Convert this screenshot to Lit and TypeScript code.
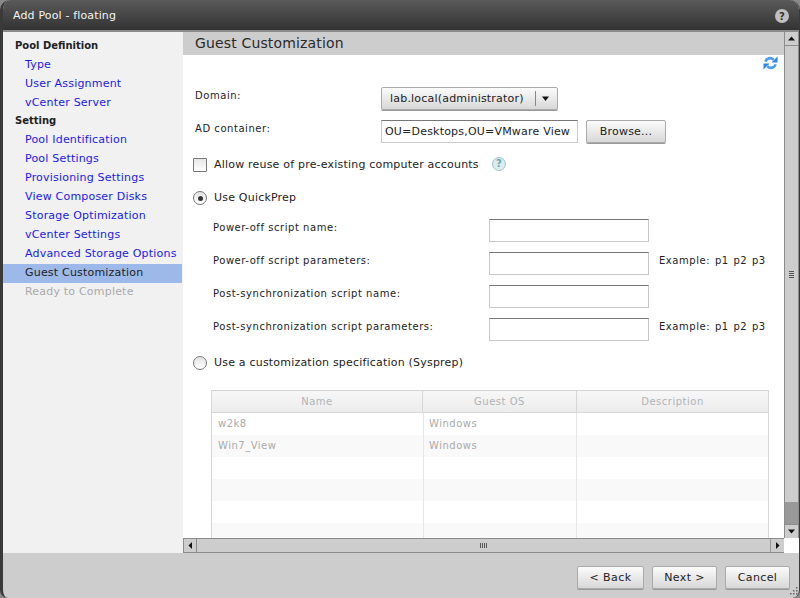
import { LitElement, html, css, svg } from "lit";
import { customElement } from "lit/decorators.js";

const tri = (d: string) => svg`<svg width="9" height="9" viewBox="0 0 9 9"><path d="${d}" fill="#111"/></svg>`;

@customElement("app-root")
export class AppRoot extends LitElement {
  static styles = css`
    :host { display: block; width: 800px; height: 598px; background: #8a8a8a; font-family: "DejaVu Sans", Verdana, sans-serif; font-size: 11px; letter-spacing: .2px; color: #222; overflow: hidden; }
    * { box-sizing: border-box; }
    .window { position: relative; height: 598px; display: flex; flex-direction: column; background: #cdcdcd; border-radius: 10px 10px 8px 8px; overflow: hidden; border-left: 3px solid #3a3a3a; border-right: 1px solid #3a3a3a; }
    .titlebar { height: 32px; flex: none; margin-left: -3px; margin-right: -1px; display: flex; align-items: flex-start; justify-content: space-between; padding: 9px 11px 0 13px; color: #f4f4f4; background: linear-gradient(#5a5a5a, #333 93%, #8a8a8a 93%, #8a8a8a); font-size: 11px; letter-spacing: .15px; }
    .help { width: 14px; height: 14px; border-radius: 50%; background: #c0c0c0; color: #333; font-size: 10px; font-weight: bold; display: flex; align-items: center; justify-content: center; letter-spacing: 0; }
    .body { flex: none; height: 521px; display: flex; }
    .side { width: 180px; flex: none; background: #f1f1f1; padding-top: 4px; }
    .side div { height: 19px; line-height: 18px; white-space: nowrap; }
    .side div.head1 { height: 20px; line-height: 20px; }
    .side div.head2 { height: 18px; line-height: 16px; }
    .head { padding-left: 12px; font-weight: bold; color: #222; font-size: 10px; letter-spacing: 0; }
    .link { padding-left: 22px; color: #1a1ae6; margin-right: 1px; }
    .cur { background: #9cb9e9; color: #222; }
    .off { color: #aaa; }
    .main { flex: 1; min-width: 0; display: flex; flex-direction: column; background: #fff; }
    .band { height: 23px; flex: none; background: #cdcdcd; padding-left: 12px; font-size: 14px; letter-spacing: .15px; line-height: 23px; color: #2a2a2a; }
    .content { flex: 1; min-height: 0; overflow: hidden; display: flex; flex-direction: column; }
    .content > * { flex: none; }
    .refresh { height: 32px; display: flex; justify-content: flex-end; padding-right: 6px; }
    .row { display: flex; align-items: center; height: 23px; }
    .row-ad { margin-top: 10px; }
    .lab { width: 198px; padding-left: 12px; font-size: 10px; letter-spacing: .55px; position: relative; top: -3px; }
    .sel { width: 177px; height: 23px; display: flex; align-items: center; border: 1px solid #aaa; border-radius: 2px; background: linear-gradient(#fbfbfb, #d8d8d8); padding-left: 8px; color: #222; box-shadow: 0 1px 0 #999; }
    .sel span { width: 145px; }
    .sep { width: 1px; height: 15px; background: #888; margin-right: 5px; }
    .input { height: 23px; background: #fff; border: 1px solid #c8c8c8; border-top-color: #777; padding-left: 3px; line-height: 21px; white-space: nowrap; overflow: hidden; }
    .ad { width: 197px; }
    .btn { height: 23px; border: 1px solid #aaa; border-radius: 2px; background: linear-gradient(#fbfbfb, #d8d8d8); display: flex; align-items: center; justify-content: center; color: #222; box-shadow: 0 1px 0 #999; }
    .browse { width: 80px; margin-left: 8px; }
    .opt { display: flex; align-items: center; padding-left: 10px; height: 16px; gap: 7px; }
    .opt .t { margin-top: -2px; }
    .opt-check { margin-top: 14px; }
    .opt-quick { margin-top: 17px; }
    .opt-spec { margin-top: 4px; }
    .box { width: 14px; height: 14px; border: 1px solid #777; background: linear-gradient(#e8e8e8, #fff); border-radius: 1px; }
    .radio { width: 14px; height: 14px; border: 1px solid #777; border-radius: 50%; background: linear-gradient(#e4e4e4, #fff); display: flex; align-items: center; justify-content: center; }
    .radio i { width: 5px; height: 5px; border-radius: 50%; background: #333; }
    .q { width: 14px; height: 14px; margin-left: 6px; border-radius: 50%; border: 1px solid #9cc4cc; background: #dcecef; color: #6ea3ad; font-size: 10px; font-weight: bold; display: flex; align-items: center; justify-content: center; margin-top: -3px; letter-spacing: 0; }
    .scripts { margin-top: 13px; }
    .sc { display: flex; align-items: center; height: 23px; margin-bottom: 10px; }
    .sc .l { width: 306px; padding-left: 30px; font-size: 10px; letter-spacing: .55px; white-space: nowrap; position: relative; top: -3px; }
    .sc .input { width: 160px; }
    .sc .e { margin-left: 10px; font-size: 10px; letter-spacing: .55px; word-spacing: 1px; white-space: nowrap; position: relative; top: -3px; }
    .table { margin-left: 28px; width: 558px; margin-top: 19px; border-left: 1px solid #d6d6d6; border-right: 1px solid #d6d6d6; border-top: 1px solid #d6d6d6; }
    .tr { display: grid; height: 22px; font-size: 10px; letter-spacing: .5px; color: #aaa; }
    .tr.h { grid-template-columns: 211px 154px 1fr; background: linear-gradient(#f7f7f7, #ececec); border-bottom: 1px solid #d6d6d6; color: #b0b4b8; }
    .tr.h div { display: flex; align-items: center; justify-content: center; border-right: 1px solid #d6d6d6; }
    .tr.h div:last-child { border-right: 0; }
    .tr.b { grid-template-columns: 212px 153px 1fr; }
    .tr.alt { background: #f9f9f9; }
    .tr.b div { display: flex; align-items: center; padding: 0 0 2px 6px; border-right: 1px solid #e6e6e6; }
    .tr.b div:nth-child(2) { padding-left: 5px; }
    .tr.b div:last-child { border-right: 0; }
    .hs { height: 15px; flex: none; display: flex; background: #cdcdcd; border-top: 1px solid #8c8c8c; border-bottom: 1px solid #8c8c8c; }
    .sb { flex: none; display: flex; align-items: center; justify-content: center; background: #cdcdcd; }
    .hs .sb { width: 14px; }
    .hs .sb.l { border-left: 1px solid #8c8c8c; border-right: 1px solid #8c8c8c; }
    .hs .sb.r { background: #cdcdcd; border-left: 1px solid #999; }
    .hs .thumb { flex: 1; display: flex; align-items: center; justify-content: center; gap: 1px; }
    .hs .thumb i { width: 1px; height: 5px; background: #555; }
    .vcol { width: 15px; flex: none; display: flex; flex-direction: column; background: #fff; }
    .vs { flex: 1; display: flex; flex-direction: column; background: #999; border-left: 1px solid #8c8c8c; border-right: 1px solid #8c8c8c; }
    .vs .sb { height: 14px; border-bottom: 1px solid #8c8c8c; }
    .vs .sb.down { border-bottom: 0; border-top: 1px solid #8c8c8c; }
    .vs .thumb { height: 456px; background: #cdcdcd; flex: none; display: flex; flex-direction: column; align-items: center; justify-content: center; gap: 1px; }
    .vs .thumb i { width: 5px; height: 1px; background: #555; }
    .vs .sp { flex: 1; }
    .corner { height: 15px; flex: none; }
    .foot { flex: 1; display: flex; justify-content: flex-end; align-items: flex-start; padding: 13px 9px 0 0; gap: 8px; font-size: 11px; letter-spacing: .4px; }
    .back { width: 67px; }
    .next, .cancel { width: 65px; }
    .grip { position: absolute; right: 0; bottom: 0; width: 12px; height: 12px; }
  `;

  render() {
    const lk = (t: string) => html`<div class="link">${t}</div>`;
    const sc = (l: string, e = "") => html`<div class="sc"><div class="l">${l}</div><div class="input"></div>${e ? html`<div class="e">${e}</div>` : ""}</div>`;
    const rows: [string, string][] = [["w2k8", "Windows"], ["Win7_View", "Windows"], ["", ""], ["", ""], ["", ""], ["", ""]];
    return html`<div class="window">
      <div class="titlebar"><span>Add Pool - floating</span><span class="help">?</span></div>
      <div class="body">
        <nav class="side">
          <div class="head head1">Pool Definition</div>
          ${lk("Type")}${lk("User Assignment")}${lk("vCenter Server")}
          <div class="head head2">Setting</div>
          ${lk("Pool Identification")}${lk("Pool Settings")}${lk("Provisioning Settings")}${lk("View Composer Disks")}${lk("Storage Optimization")}${lk("vCenter Settings")}${lk("Advanced Storage Options")}
          <div class="link cur">Guest Customization</div>
          <div class="link off">Ready to Complete</div>
        </nav>
        <div class="main">
          <div class="band">Guest Customization</div>
          <div class="content">
            <div class="refresh"><svg width="15" height="16" viewBox="0 0 16 16" fill="none" stroke="#4a9cf0" stroke-width="2.8"><path d="M2.5 6.5C3.5 3 8 1.5 11.5 4.5"/><path d="M13.5 9.5C12.5 13 8 14.5 4.5 11.5"/><path d="M9 7.5L15.5 7.5 15.5 1z" fill="#2f86e6" stroke="none"/><path d="M7 8.5L.5 8.5 .5 15z" fill="#2f86e6" stroke="none"/></svg></div>
            <div class="row"><div class="lab">Domain:</div><div class="sel"><span>lab.local(administrator)</span><i class="sep"></i>${tri("M1 2.5h7L4.5 7z")}</div></div>
            <div class="row row-ad"><div class="lab">AD container:</div><div class="input ad">OU=Desktops,OU=VMware View</div><div class="btn browse">Browse...</div></div>
            <div class="opt opt-check"><span class="box"></span><span class="t">Allow reuse of pre-existing computer accounts</span><span class="q">?</span></div>
            <div class="opt opt-quick"><span class="radio"><i></i></span><span class="t">Use QuickPrep</span></div>
            <div class="scripts">
              ${sc("Power-off script name:")}${sc("Power-off script parameters:", "Example: p1 p2 p3")}${sc("Post-synchronization script name:")}${sc("Post-synchronization script parameters:", "Example: p1 p2 p3")}
            </div>
            <div class="opt opt-spec"><span class="radio"></span><span class="t">Use a customization specification (Sysprep)</span></div>
            <div class="table">
              <div class="tr h"><div>Name</div><div>Guest OS</div><div>Description</div></div>
              ${rows.map((r, i) => html`<div class="tr b ${i % 2 ? "alt" : ""}"><div>${r[0]}</div><div>${r[1]}</div><div></div></div>`)}
            </div>
          </div>
          <div class="hs">
            <div class="sb l">${tri("M6 1v7L2.5 4.5z")}</div>
            <div class="thumb"><i></i><i></i><i></i><i></i></div>
            <div class="sb r">${tri("M3 1v7l3.5-3.5z")}</div>
          </div>
        </div>
        <div class="vcol">
          <div class="vs">
            <div class="sb">${tri("M1 6.5h7L4.5 2.5z")}</div>
            <div class="thumb"><i></i><i></i><i></i><i></i></div>
            <div class="sp"></div>
            <div class="sb down">${tri("M1 2.5h7L4.5 6.5z")}</div>
          </div>
          <div class="corner"></div>
        </div>
      </div>
      <div class="foot">
        <div class="btn back">&lt; Back</div>
        <div class="btn next">Next &gt;</div>
        <div class="btn cancel">Cancel</div>
      </div>
      <svg class="grip" viewBox="0 0 12 12" fill="#666"><rect x="9" y="1" width="1.5" height="1.5"/><rect x="6" y="4" width="1.5" height="1.5"/><rect x="9" y="4" width="1.5" height="1.5"/><rect x="3" y="7" width="1.5" height="1.5"/><rect x="6" y="7" width="1.5" height="1.5"/><rect x="9" y="7" width="1.5" height="1.5"/></svg>
    </div>`;
  }
}
